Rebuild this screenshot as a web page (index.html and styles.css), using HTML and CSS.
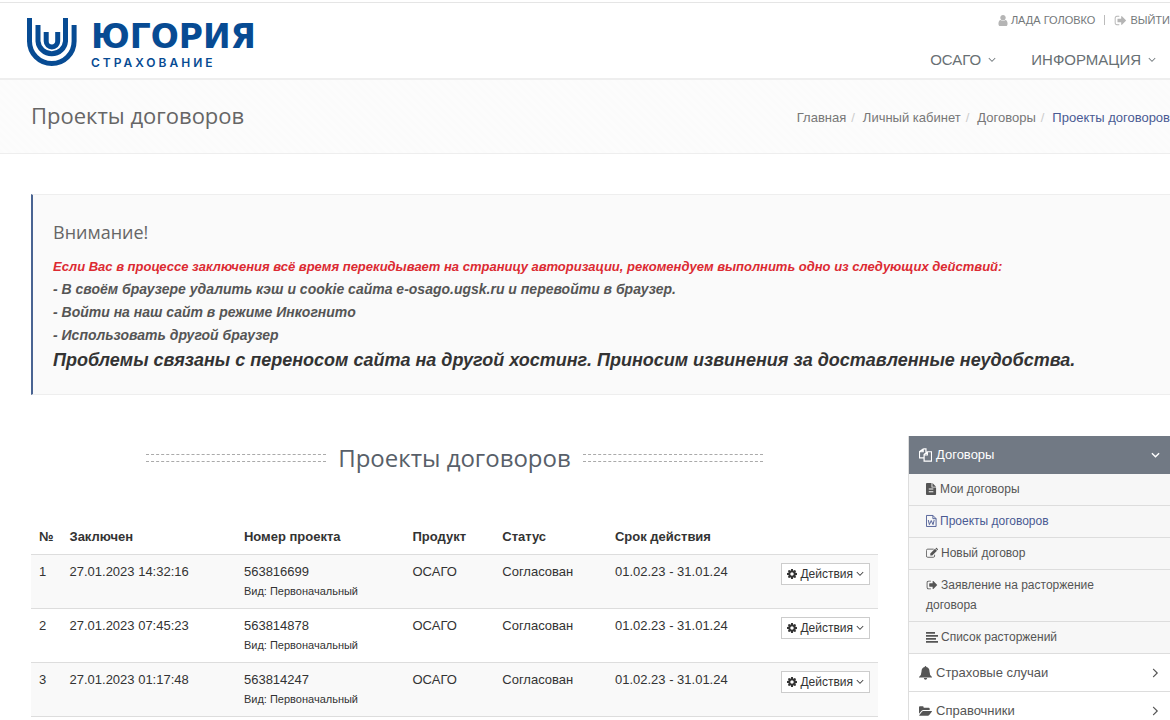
FILE: index.html
```html
<!DOCTYPE html>
<html lang="ru">
<head>
<meta charset="utf-8">
<meta name="viewport" content="width=device-width, initial-scale=1">
<title>Проекты договоров</title>
<link rel="stylesheet" href="styles.css">
</head>
<body>
<svg class="sprite" aria-hidden="true">
  <symbol id="user" viewBox="192 0 1408 1792"><path d="M1536 1399q0 109-62.500 187t-150.500 78h-854q-88 0-150.500-78t-62.500-187q0-85 8.500-160.500t31.500-152 58.500-131 94-89 134.500-34.500q131 128 313 128t313-128q76 0 134.500 34.500t94 89 58.500 131 31.500 152 8.500 160.500zm-256-887q0 159-112.500 271.500t-271.500 112.500-271.500-112.500-112.500-271.500 112.500-271.500 271.500-112.500 271.500 112.500 112.500 271.500z"/></symbol>
  <symbol id="sign-out" viewBox="64 0 1600 1792"><path d="M704 1440q0 4 1 20t.5 26.500-3 23.500-10 19.500-20.500 6.500h-320q-119 0-203.500-84.500t-84.500-203.500v-704q0-119 84.500-203.500t203.500-84.500h320q13 0 22.500 9.500t9.500 22.500q0 4 1 20t.5 26.500-3 23.500-10 19.500-20.500 6.500h-320q-66 0-113 47t-47 113v704q0 66 47 113t113 47h312l11.500 1 11.500 3 8 5.500 7 9 2 13.500zm928-544q0 26-19 45l-544 544q-19 19-45 19t-45-19-19-45v-288h-448q-26 0-45-19t-19-45v-384q0-26 19-45t45-19h448v-288q0-26 19-45t45-19 45 19l544 544q19 19 19 45z"/></symbol>
  <symbol id="angle-down" viewBox="384 384 1024 1152"><path d="M1395 736q0 13-10 23l-466 466q-10 10-23 10t-23-10l-466-466q-10-10-10-23t10-23l50-50q10-10 23-10t23 10l393 393 393-393q10-10 23-10t23 10l50 50q10 10 10 23z"/></symbol>
  <symbol id="angle-down-bold" viewBox="0 0 10 10"><path d="M1 3l4 4 4-4" fill="none" stroke="currentColor" stroke-width="1.600"/></symbol>
  <symbol id="angle-right" viewBox="384 448 1024 1024"><path d="M1171 960q0 13-10 23l-466 466q-10 10-23 10t-23-10l-50-50q-10-10-10-23t10-23l393-393-393-393q-10-10-10-23t10-23l50-50q10-10 23-10t23 10l466 466q10 10 10 23z"/></symbol>
  <symbol id="cog" viewBox="128 128 1536 1536"><path d="M1152 896q0-106-75-181t-181-75-181 75-75 181 75 181 181 75 181-75 75-181zm512-109v222q0 12-8 23t-20 13l-185 28q-19 54-39 91 35 50 107 138 10 12 10 25t-9 23q-27 37-99 108t-94 71q-12 0-26-9l-138-108q-44 23-91 38-16 136-29 186-7 28-36 28h-222q-14 0-24.500-8.500t-11.500-21.500l-28-184q-49-16-90-37l-141 107q-10 9-25 9-14 0-25-11-126-114-165-168-7-10-7-23 0-12 8-23 15-21 51-66.500t54-70.500q-27-50-41-99l-183-27q-13-2-21-12.500t-8-23.500v-222q0-12 8-23t19-13l186-28q14-46 39-92-40-57-107-138-10-12-10-24 0-10 9-23 26-36 98.500-107.500t94.500-71.500q13 0 26 10l138 107q44-23 91-38 16-136 29-186 7-28 36-28h222q14 0 24.500 8.500t11.500 21.500l28 184q49 16 90 37l142-107q9-9 24-9 13 0 25 10 129 119 165 170 7 8 7 22 0 12-8 23-15 21-51 66.500t-54 70.500q26 50 41 98l183 28q13 2 21 12.500t8 23.500z"/></symbol>
  <symbol id="copy" viewBox="0 0 14 14"><path d="M4.500.5h3v3.500M4.500.5v3h-4M4.500.5l-4 3v6.500h5M5.500 6.500l3.500-3h4.500v10h-8zM9 3.500v3.500H5.500" fill="none" stroke="currentColor" stroke-width="1.300"/></symbol>
  <symbol id="file-text" viewBox="0 0 12 14"><path fill-rule="evenodd" d="M1 1h5v5h5v7a1 1 0 0 1-1 1H1a1 1 0 0 1-1-1V2a1 1 0 0 1 1-1zM7 1l4 4H7zM3 7v1h5V7zM3 10v1h5v-1z"/></symbol>
  <symbol id="file-word" viewBox="0 0 12 14"><path d="M.5 1.500h7l3.500 3.500v8.500H.5zM7.500 1.500V5H11M2.500 6.500l1.200 5 2-4.500 2 4.500 1.200-5" fill="none" stroke="currentColor"/></symbol>
  <symbol id="edit" viewBox="0 0 14 12"><path d="M9 1.500H2A1.500 1.500 0 0 0 .5 3v6.500A1.500 1.500 0 0 0 2 11h6.500A1.500 1.500 0 0 0 10 9.500V8" fill="none" stroke="currentColor"/><path d="M5 6.500L10.500 1l2.300 2.300L7.300 8.800H5zM11 .6l.6-.5q.5-.3 1 .1l1.100 1.200q.5.5 0 1l-.5.500z"/></symbol>
  <symbol id="align-left" viewBox="0 0 12 12"><path d="M0 1h9v1.700H0zM0 4h12v1.700H0zM0 7h10v1.700H0zM0 10h12v1.700H0z"/></symbol>
  <symbol id="bell" viewBox="0 0 13 14"><path d="M6.500 0q.8 0 .8 1.100Q10.500 1.800 10.500 5.500q0 3.700 2.500 5.500v.6H0V11q2.500-1.800 2.500-5.500 0-3.700 3.200-4.400Q5.700 0 6.500 0zM4.800 12h3.400q-.2 1.700-1.700 1.700T4.800 12z"/></symbol>
  <symbol id="folder-open" viewBox="0 0 14 12"><path d="M0 9V2q0-1 1-1h3q1 0 1 1v.5h5.500q1 0 1 1V5H4.500Q3.500 5 2.800 5.700zM4.500 6h9q.8 0 .3.700L11 10.400q-.5.600-1.300.6H.7Q0 11 .4 10.300l2.800-3.600Q3.700 6 4.500 6z"/></symbol>
</svg>

<header class="header">
  <a class="logo" href="#" aria-label="Югория Страхование">
    <svg class="logo-mark" viewBox="0 0 50 48" aria-hidden="true"><path d="M2.500 0v23.200a22.300 22.300 0 0 0 44.600 0V7M11 7v16.200a13.800 13.800 0 0 0 27.500 0V0M19.200 14v9.200a5.700 5.700 0 0 0 11.500 0V14"/></svg>
    <span class="logo-text">
      <span class="logo-name">ЮГОРИЯ</span>
      <span class="logo-sub">СТРАХОВАНИЕ</span>
    </span>
  </a>
  <div class="header-side">
    <div class="topbar">
      <a href="#"><svg class="ico-user"><use href="#user"/></svg>ЛАДА ГОЛОВКО</a>
      <span class="divider"></span>
      <a href="#"><svg class="ico-exit"><use href="#sign-out"/></svg>ВЫЙТИ</a>
    </div>
    <nav class="nav">
      <a href="#">ОСАГО<svg class="caret"><use href="#angle-down"/></svg></a>
      <a href="#">ИНФОРМАЦИЯ<svg class="caret"><use href="#angle-down"/></svg></a>
    </nav>
  </div>
</header>

<section class="crumbs-bar">
  <h1>Проекты договоров</h1>
  <ol class="crumbs">
    <li><a href="#">Главная</a></li>
    <li><a href="#">Личный кабинет</a></li>
    <li><a href="#">Договоры</a></li>
    <li class="current">Проекты договоров</li>
  </ol>
</section>

<main class="content">
  <section class="notice">
    <h2>Внимание!</h2>
    <p class="notice-red">Если Вас в процессе заключения всё время перекидывает на страницу авторизации, рекомендуем выполнить одно из следующих действий:</p>
    <p>- В своём браузере удалить кэш и cookie сайта e-osago.ugsk.ru и перевойти в браузер.</p>
    <p>- Войти на наш сайт в режиме Инкогнито</p>
    <p>- Использовать другой браузер</p>
    <p class="notice-big">Проблемы связаны с переносом сайта на другой хостинг. Приносим извинения за доставленные неудобства.</p>
  </section>

  <div class="columns">
    <section class="projects">
      <div class="headline"><h2>Проекты договоров</h2></div>
      <table class="table">
        <colgroup><col class="c-num"><col class="c-date"><col class="c-id"><col class="c-prod"><col class="c-status"><col class="c-term"><col></colgroup>
        <thead>
          <tr><th>№</th><th>Заключен</th><th>Номер проекта</th><th>Продукт</th><th>Статус</th><th>Срок действия</th><td></td></tr>
        </thead>
        <tbody>
          <tr><td>1</td><td>27.01.2023 14:32:16</td><td>563816699<small>Вид: Первоначальный</small></td><td>ОСАГО</td><td>Согласован</td><td>01.02.23 - 31.01.24</td><td class="act"><button type="button"><svg class="ico-cog"><use href="#cog"/></svg>Действия<svg class="caret"><use href="#angle-down"/></svg></button></td></tr>
          <tr><td>2</td><td>27.01.2023 07:45:23</td><td>563814878<small>Вид: Первоначальный</small></td><td>ОСАГО</td><td>Согласован</td><td>01.02.23 - 31.01.24</td><td class="act"><button type="button"><svg class="ico-cog"><use href="#cog"/></svg>Действия<svg class="caret"><use href="#angle-down"/></svg></button></td></tr>
          <tr><td>3</td><td>27.01.2023 01:17:48</td><td>563814247<small>Вид: Первоначальный</small></td><td>ОСАГО</td><td>Согласован</td><td>01.02.23 - 31.01.24</td><td class="act"><button type="button"><svg class="ico-cog"><use href="#cog"/></svg>Действия<svg class="caret"><use href="#angle-down"/></svg></button></td></tr>
        </tbody>
      </table>
    </section>

    <aside class="sidebar">
      <a class="group active" href="#"><svg class="ico-m"><use href="#copy"/></svg>Договоры<svg class="arrow"><use href="#angle-down-bold"/></svg></a>
      <ul>
        <li><a href="#"><svg class="ico-file"><use href="#file-text"/></svg>Мои договоры</a></li>
        <li><a class="selected" href="#"><svg class="ico-file"><use href="#file-word"/></svg>Проекты договоров</a></li>
        <li><a href="#"><svg class="ico-s"><use href="#edit"/></svg>Новый договор</a></li>
        <li><a href="#"><svg class="ico-s"><use href="#sign-out"/></svg>Заявление на расторжение договора</a></li>
        <li><a href="#"><svg class="ico-s"><use href="#align-left"/></svg>Список расторжений</a></li>
      </ul>
      <a class="group" href="#"><svg class="ico-m"><use href="#bell"/></svg>Страховые случаи<svg class="arrow"><use href="#angle-right"/></svg></a>
      <a class="group" href="#"><svg class="ico-m"><use href="#folder-open"/></svg>Справочники<svg class="arrow"><use href="#angle-right"/></svg></a>
    </aside>
  </div>
</main>
</body>
</html>
```
FILE: styles.css
```css
* { box-sizing: border-box; }
body {
  margin: 0;
  padding-top: 2px;
  overflow: hidden;
  background: #fff;
  color: #333;
  font: 13px/20px "Liberation Sans", Arial, sans-serif;
}
a { color: inherit; text-decoration: none; }
h1, h2, p, ol, ul { margin: 0; padding: 0; }
ol, ul { list-style: none; }
h1, h2 { font-family: "Open Sans", sans-serif; font-weight: 400; color: #585f69; }
svg { fill: currentColor; flex: none; }
.sprite { position: absolute; width: 0; height: 0; }

.header {
  display: flex;
  justify-content: space-between;
  height: 78px;
  padding-left: 27px;
  border-top: 1px solid #e5e5e5;
  border-bottom: 2px solid #eee;
}
.logo { display: flex; gap: 14px; padding-top: 15px; color: #074b93; }
.logo-mark { width: 50px; height: 48px; fill: none; stroke: currentColor; stroke-width: 5; }
.logo-text { display: flex; flex-direction: column; }
.logo-name { font-family: "DejaVu Sans", sans-serif; font-size: 33px; line-height: 38px; font-weight: 700; }
.logo-sub { font-family: Inter, sans-serif; font-size: 12px; line-height: 14px; font-weight: 600; letter-spacing: 3px; }
.header-side { display: flex; flex-direction: column; align-items: flex-end; white-space: nowrap; }
.topbar { display: flex; align-items: center; gap: 9px; padding-top: 7px; font-size: 11px; color: #74787a; }
.topbar a { display: flex; align-items: center; gap: 3px; }
.topbar svg { color: #b5b5b5; }
.ico-user { width: 10px; height: 13px; }
.ico-exit { width: 13px; height: 13px; }
.divider { width: 1px; height: 10px; background: #bbb; }
.nav { display: flex; gap: 35px; padding: 20px 14px 0 0; font-size: 15px; color: #687074; }
.nav a { display: flex; align-items: center; gap: 7px; }
.caret { width: 8px; height: 8px; }

.crumbs-bar {
  display: flex;
  align-items: center;
  justify-content: space-between;
  height: 74px;
  padding-left: 31px;
  background: repeating-linear-gradient(45deg, #fbfbfb 0 3px, #fcfcfc 3px 6px);
  border-bottom: 1px solid #eee;
  white-space: nowrap;
}
.crumbs-bar h1 { padding-bottom: 4px; font-size: 22px; line-height: 32px; color: #666; }
.crumbs { display: flex; padding-top: 2px; color: #777; }
.crumbs li + li::before { content: "/"; padding: 0 8px 0 5px; color: #ccc; }
.crumbs .current { color: #4a5a93; }

.content { padding: 40px 0 0 31px; }
.notice {
  padding: 21px 20px;
  background: #fafafa;
  border: 1px solid #eee;
  border-left: 2px solid #4a6492;
  border-right: 0;
  font-size: 14px;
  line-height: 23px;
  font-weight: 700;
  font-style: italic;
  color: #555;
}
.notice h2 { padding-bottom: 7px; font-size: 18px; line-height: 32px; font-weight: 400; font-style: normal; color: #666; }
.notice .notice-red { font-size: 13px; color: #dc2a32; }
.notice .notice-big { font-size: 18px; line-height: 26px; color: #333; }

.columns { display: grid; grid-template-columns: minmax(0, 847fr) minmax(0, 262fr); gap: 30px; padding-top: 41px; }
.headline { display: flex; justify-content: center; align-items: center; gap: 12px; }
.headline h2 { font-size: 24px; line-height: 44px; white-space: nowrap; }
.headline::before, .headline::after {
  content: "";
  width: 180px;
  height: 6px;
  border: dashed #aaa;
  border-width: 1px 0;
}
.table { width: 100%; margin-top: 40px; border-collapse: collapse; table-layout: fixed; }
.c-num { width: 3.6%; }
.c-date { width: 20.6%; }
.c-id { width: 19.9%; }
.c-prod { width: 10.6%; }
.c-status { width: 13.3%; }
.c-term { width: 19.6%; }
.table th, .table td { padding: 7px 8px; text-align: left; vertical-align: top; white-space: nowrap; }
.table tbody tr { height: 54px; border-top: 1px solid #ddd; }
.table tbody tr:last-child { border-bottom: 1px solid #ddd; }
.table tbody tr:nth-child(odd) { background: #f9f9f9; }
.table small { display: block; font-size: 11px; line-height: 19px; }
.table .act { padding-top: 8px; text-align: right; }
.act button {
  display: inline-flex;
  align-items: center;
  gap: 3px;
  height: 22px;
  padding: 0 5px;
  border: 1px solid #ccc;
  background: #fff;
  color: #333;
  font: 12px/18px "Liberation Sans", Arial, sans-serif;
}
.ico-cog { width: 10px; height: 10px; }

.sidebar { border-left: 1px solid #ddd; color: #555; }
.group { display: flex; align-items: center; gap: 4px; height: 38px; padding: 0 10px; border-bottom: 1px solid #ddd; }
.group.active { background: #717984; border-color: #717984; color: #fff; }
.arrow { width: 9px; height: 10px; margin-left: auto; }
.ico-m { width: 13px; height: 14px; }
.sidebar li { padding: 5px 60px 6px 17px; border-bottom: 1px solid #ddd; background: #f7f7f7; font-size: 12px; }
.sidebar li svg { margin-right: 3px; vertical-align: -2px; }
.selected { color: #4a5a93; }
.ico-file { width: 11px; height: 13px; }
.ico-s { width: 12px; height: 12px; }
```
